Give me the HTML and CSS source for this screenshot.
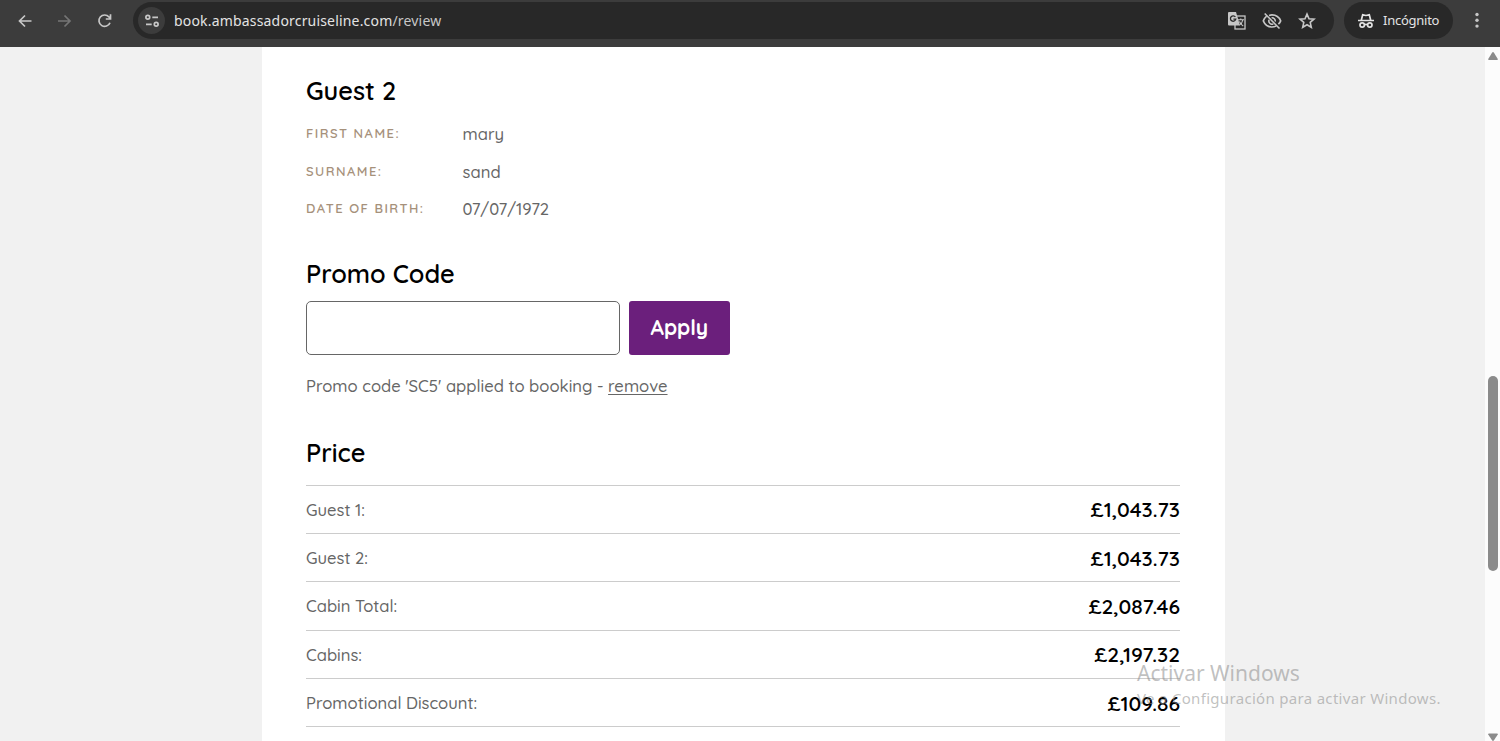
FILE: index.html
```html
<!DOCTYPE html>
<html lang="en">
<head>
    <meta charset="UTF-8">
    <meta name="viewport" content="width=device-width, initial-scale=1.0">
    <title>Review your booking</title>
    <link rel="stylesheet" href="styles.css">
</head>
<body>
    <header class="toolbar">
        <div class="nav-buttons">
            <svg class="icon" viewBox="0 0 18 18"><path d="M15.5 9H3.5M9 3.5L3.5 9 9 14.5"></path></svg>
            <svg class="icon disabled" viewBox="0 0 18 18"><path d="M2 9h12M8.5 3.5L14 9l-5.5 5.5"></path></svg>
            <svg class="icon" viewBox="0 0 18 18"><path d="M14 10.7A5.7 5.7 0 1 1 13 5L14.3 6.5M14.5 2.3V7H9.8"></path></svg>
        </div>
        <div class="address-bar">
            <div class="site-info">
                <svg class="icon" viewBox="0 0 18 18"><circle cx="4.8" cy="5.3" r="1.9"></circle><circle cx="13.2" cy="12.3" r="1.9"></circle><path d="M9.3 5.3H15M3 12.3h5.7"></path></svg>
            </div>
            <div class="url">book.ambassadorcruiseline.com<span>/review</span></div>
            <div class="bar-actions">
                <svg class="translate" viewBox="0 0 20 20">
                    <rect x="8" y="5" width="10" height="13" fill="none" stroke="#c7c7c7" stroke-width="1.3"></rect>
                    <path d="M2 1h7l4 13.5H2a1 1 0 0 1-1-1V2a1 1 0 0 1 1-1z" fill="#c7c7c7"></path>
                    <path d="M8.4 6A2.7 2.7 0 1 0 8.8 8.2H6.4" fill="none" stroke="#282828" stroke-width="1.3"></path>
                    <path d="M11 8.7H17M13.8 7.4v1.3M15.8 9c-.5 2.4-1.8 4.1-3.2 5M12.4 10.4c.9 2 2 3.3 3.8 4.6" fill="none" stroke="#c7c7c7" stroke-width="1.1"></path>
                </svg>
                <svg class="eye" viewBox="0 0 20 20"><path d="M2.7 2.5l14.8 15M4.4 5.4C3 6.5 2 8 1.3 9.9 2.8 13.7 6 16 10 16c1.5 0 2.8-.3 4-.9M7 4.4c1-.3 2-.5 3-.5 4 0 7.2 2.3 8.7 6-.5 1.3-1.3 2.4-2.3 3.3M9.6 6.8a3.2 3.2 0 0 1 3.6 3.7M7.1 8.7a3.2 3.2 0 0 0 4.2 4.2"></path></svg>
                <svg class="star" viewBox="0 0 20 20"><path d="M10 3.1l2 4.6 5 .4-3.8 3.3 1.1 4.9-4.3-2.6-4.3 2.6 1.1-4.9L3 8.1l5-.4z"></path></svg>
            </div>
        </div>
        <div class="incognito">
            <svg viewBox="0 0 18 18"><path d="M1 8.5h16M4.3 8.2l1.4-5.4 3.3.7 3.3-.7 1.4 5.4"></path><circle cx="5.2" cy="13" r="2.2"></circle><circle cx="12.8" cy="13" r="2.2"></circle><path d="M7.3 12.7q1.7-.8 3.4 0"></path></svg>
            <span>Incógnito</span>
        </div>
        <svg class="menu" viewBox="0 0 6 18"><circle cx="3" cy="3.5" r="1.7"></circle><circle cx="3" cy="9.3" r="1.7"></circle><circle cx="3" cy="15.1" r="1.7"></circle></svg>
    </header>

    <div class="viewport">
        <main>
            <section class="guest">
                <h2>Guest 2</h2>
                <dl>
                    <dt>First name:</dt><dd>mary</dd>
                    <dt>Surname:</dt><dd>sand</dd>
                    <dt>Date of birth:</dt><dd>07/07/1972</dd>
                </dl>
            </section>

            <section class="promo">
                <h2>Promo Code</h2>
                <div class="promo-form">
                    <input type="text" aria-label="Promo code">
                    <button>Apply</button>
                </div>
                <p>Promo code 'SC5' applied to booking - <a>remove</a></p>
            </section>

            <section class="price">
                <h2>Price</h2>
                <ul>
                    <li><span>Guest 1:</span><strong>£1,043.73</strong></li>
                    <li><span>Guest 2:</span><strong>£1,043.73</strong></li>
                    <li><span>Cabin Total:</span><strong>£2,087.46</strong></li>
                    <li><span>Cabins:</span><strong>£2,197.32</strong></li>
                    <li><span>Promotional Discount:</span><strong>£109.86</strong></li>
                </ul>
            </section>
        </main>
        <div class="scrollbar">
            <svg viewBox="0 0 12 10"><path d="M5.2 1.5q.8-.9 1.6 0L10.8 8q.3 1-.8 1H2q-1.1 0-.8-1z"></path></svg>
            <div class="thumb"></div>
            <svg class="down" viewBox="0 0 12 10"><path d="M2 1.5h8q1.1 0 .8 1L6.8 8.5q-.8.9-1.6 0L1.2 2.5q-.3-1 .8-1z"></path></svg>
        </div>
    </div>

    <div class="watermark">
        <div class="watermark-title">Activar Windows</div>
        <div class="watermark-text">Ve a Configuración para activar Windows.</div>
    </div>
</body>
</html>
```
FILE: styles.css
```css
/* Reset and base styles */
* {
    margin: 0;
    padding: 0;
    box-sizing: border-box;
}
body {
    height: 741px;
    overflow: hidden;
    display: flex;
    flex-direction: column;
    font-family: Quicksand, Lato, sans-serif;
    font-size: 16.6px;
    font-weight: 500;
    color: #666;
    background: #f1f1f1;
}
svg {
    display: block;
    flex: none;
}

/* Browser toolbar */
.toolbar {
    height: 47px;
    flex: none;
    display: flex;
    align-items: flex-start;
    padding-top: 2px;
    background: #3c3c3c;
    font-family: "Noto Sans", sans-serif;
    font-weight: 400;
}
.nav-buttons {
    width: 133px;
    height: 37px;
    padding-left: 16px;
    display: flex;
    align-items: center;
    gap: 22px;
}
.icon {
    width: 18px;
    height: 18px;
    fill: none;
    stroke: #c7c7c7;
    stroke-width: 1.7;
}
.disabled {
    stroke: #757575;
}
.address-bar {
    width: 1201px;
    height: 37px;
    padding: 0 17px 0 5px;
    border-radius: 19px;
    background: #282828;
    display: flex;
    align-items: center;
}
.site-info {
    width: 27px;
    height: 27px;
    border-radius: 50%;
    background: #3c3c3c;
    display: flex;
    align-items: center;
    justify-content: center;
}
.url {
    margin-left: 9px;
    font-size: 14px;
    letter-spacing: 0.18px;
    color: #e3e3e3;
    white-space: nowrap;
}
.url span {
    color: #c7c7c7;
}
.bar-actions {
    margin-left: auto;
    display: flex;
    gap: 15px;
}
.bar-actions svg {
    width: 20px;
    height: 20px;
}
.eye,
.star {
    fill: none;
    stroke: #c7c7c7;
    stroke-width: 1.6;
}
.incognito {
    width: 109px;
    height: 37px;
    margin-left: 10px;
    padding-left: 13px;
    border-radius: 19px;
    background: #282828;
    color: #e3e3e3;
    font-size: 13px;
    letter-spacing: -0.25px;
    display: flex;
    align-items: center;
    gap: 8px;
}
.incognito span {
    margin-top: -2px;
}
.incognito svg {
    width: 18px;
    height: 18px;
    fill: none;
    stroke: #e3e3e3;
    stroke-width: 1.7;
}
.menu {
    width: 6px;
    height: 18px;
    margin: 9px 0 0 21px;
    fill: #c7c7c7;
}

/* Booking page */
.viewport {
    flex: 1;
    min-height: 0;
    display: flex;
    justify-content: space-between;
    padding-left: 262px;
}
main {
    width: 963px;
    padding: 28px 45px 0 44px;
    background: white;
}
h2 {
    height: 32px;
    line-height: 32px;
    font-size: 25.3px;
    font-weight: 600;
    color: #000;
}
dl {
    margin-top: 8px;
    display: grid;
    grid-template-columns: 156.5px 1fr;
    grid-auto-rows: 37.5px;
    line-height: 37px;
}
dt {
    font-size: 13px;
    font-weight: 600;
    text-transform: uppercase;
    letter-spacing: 1.45px;
    color: #a6917b;
}

/* Promo code */
.promo {
    margin-top: 30px;
}
.promo-form {
    margin-top: 11px;
    display: flex;
    gap: 8.5px;
}
.promo-form input {
    width: 314px;
    height: 54px;
    border: 1px solid #666;
    border-radius: 5px;
}
.promo-form button {
    width: 101.5px;
    height: 54px;
    padding-bottom: 2px;
    border: none;
    border-radius: 3px;
    background: #6b1f7c;
    color: white;
    font: 700 21px Quicksand, Lato, sans-serif;
}
.promo p {
    margin-top: 18px;
    line-height: 26px;
}
.promo a {
    text-decoration: underline;
    text-underline-offset: 2px;
}

/* Price list */
.price {
    margin-top: 38px;
}
.price ul {
    margin-top: 16px;
    list-style: none;
    border-top: 1px solid #ccc;
}
.price li {
    height: 48.4px;
    display: flex;
    align-items: center;
    justify-content: space-between;
    border-bottom: 1px solid #ccc;
}
.price strong {
    font-size: 21px;
    font-weight: 600;
    color: #000;
}

/* Scrollbar */
.scrollbar {
    width: 15px;
    padding-top: 4px;
    background: #fcfcfc;
    display: flex;
    flex-direction: column;
    align-items: center;
}
.scrollbar svg {
    width: 12px;
    height: 10px;
    fill: #8b8b8b;
}
.thumb {
    width: 10px;
    height: 195px;
    margin-top: 315px;
    border-radius: 5px;
    background: #8b8b8b;
}
.scrollbar .down {
    margin-top: auto;
    margin-bottom: -1px;
}

/* Windows activation overlay */
.watermark {
    position: absolute;
    left: 1137px;
    top: 659px;
    font-family: "Noto Sans", sans-serif;
    font-weight: 400;
    color: rgba(140, 140, 140, 0.55);
    white-space: nowrap;
}
.watermark-title {
    font-size: 21px;
    line-height: 28px;
}
.watermark-text {
    font-size: 15px;
    line-height: 22px;
    letter-spacing: 0.31px;
}
```
